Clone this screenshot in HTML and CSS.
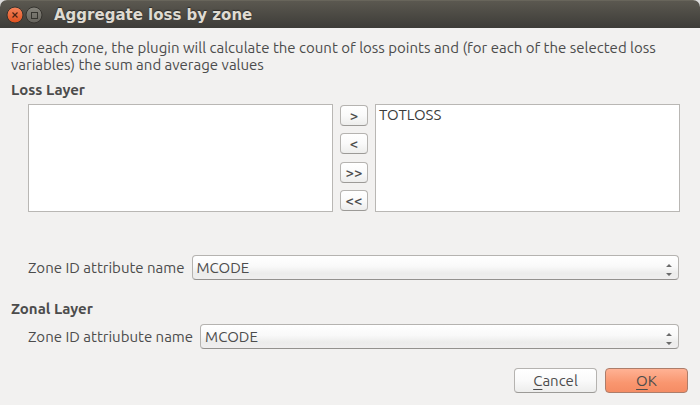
FILE: index.html
```html
<!DOCTYPE html>
<html lang="en">
<head>
<meta charset="utf-8">
<title>Aggregate loss by zone</title>
<link rel="stylesheet" href="styles.css">
</head>
<body>
<div class="window">
  <header class="titlebar">
    <button class="winbtn" type="button" aria-label="Close">
      <svg viewBox="0 0 18 18" width="18" height="18">
        <defs><linearGradient id="closeFill" x1="0" y1="0" x2="0" y2="1"><stop offset="0" stop-color="#f4845c"/><stop offset="1" stop-color="#e0501d"/></linearGradient></defs>
        <circle cx="9" cy="9" r="8" fill="url(#closeFill)" stroke="#35332e"/>
        <path d="M6.5 6.5l5 5M11.5 6.5l-5 5" stroke="#4a2416" stroke-width="1.2"/>
      </svg>
    </button>
    <button class="winbtn" type="button" aria-label="Maximize">
      <svg viewBox="0 0 18 18" width="18" height="18">
        <defs><linearGradient id="maxFill" x1="0" y1="0" x2="0" y2="1"><stop offset="0" stop-color="#86847c"/><stop offset="1" stop-color="#65635c"/></linearGradient></defs>
        <circle cx="9" cy="9" r="8" fill="url(#maxFill)" stroke="#35332e"/>
        <rect x="6.5" y="6.5" width="6" height="6" fill="none" stroke="#35342f"/>
      </svg>
    </button>
    <h1 class="title">Aggregate loss by zone</h1>
  </header>
  <form class="content">
    <p class="intro">For each zone, the plugin will calculate the count of loss points and (for each of the selected loss variables) the sum and average values</p>

    <h2 class="heading">Loss Layer</h2>
    <div class="picker">
      <select class="list" multiple aria-label="Available variables"></select>
      <div class="movers">
        <button class="button mover" type="button">&gt;</button>
        <button class="button mover" type="button">&lt;</button>
        <button class="button mover" type="button">&gt;&gt;</button>
        <button class="button mover" type="button">&lt;&lt;</button>
      </div>
      <select class="list" multiple aria-label="Selected variables"><option>TOTLOSS</option></select>
    </div>
    <div class="field">
      <label for="lossZone">Zone ID attribute name</label>
      <div class="combo">
        <select id="lossZone"><option>MCODE</option></select>
        <svg class="arrows" viewBox="0 0 6 12" width="6" height="12"><path d="M0 3L3 0L6 3zM0 9L3 12L6 9z"/></svg>
      </div>
    </div>

    <h2 class="heading zonal">Zonal Layer</h2>
    <div class="field">
      <label for="zonalZone">Zone ID attriubute name</label>
      <div class="combo">
        <select id="zonalZone"><option>MCODE</option></select>
        <svg class="arrows" viewBox="0 0 6 12" width="6" height="12"><path d="M0 3L3 0L6 3zM0 9L3 12L6 9z"/></svg>
      </div>
    </div>

    <div class="actions">
      <button class="button action" type="button"><span class="key">C</span>ancel</button>
      <button class="button action primary" type="submit"><span class="key">O</span>K</button>
    </div>
  </form>
</div>
</body>
</html>
```
FILE: styles.css
```css
* {
  box-sizing: border-box;
}

body {
  margin: 0;
  background: #dcdcdc;
  color: #4c4c4c;
  font: 15px/17px Ubuntu, "Noto Sans", sans-serif;
}

.window {
  min-height: 100vh;
  background: #f2f1f0;
  border-radius: 7px 7px 0 0;
  overflow: hidden;
}

.titlebar {
  display: flex;
  align-items: center;
  gap: 1px;
  height: 28px;
  padding-left: 6px;
  background: linear-gradient(#5b5850, #3d3c38);
  border-top: 1px solid #68655b;
}

.winbtn {
  display: block;
  width: 18px;
  height: 18px;
  padding: 0;
  border: 0;
  background: none;
}

.winbtn svg {
  display: block;
}

.title {
  margin: 0 0 0 10px;
  color: #dfdbd2;
  font: bold 15px/18px "DejaVu Sans", sans-serif;
  text-shadow: 0 -1px 1px #2b2a27;
}

.content {
  padding: 11px 12px 0 11px;
}

.intro {
  margin: 0 0 8px;
}

.heading {
  margin: 0;
  font-size: 15px;
  line-height: 17px;
}

.picker {
  display: flex;
  gap: 7px;
  height: 108px;
  margin: 6px 8px 43px 17px;
}

.list {
  flex: 1;
  min-width: 0;
  height: 100%;
  margin: 0;
  padding: 1px 2px;
  border: 1px solid #b9b7b4;
  border-radius: 0;
  background: #fff;
  color: #3c3c3c;
  font: inherit;
  outline: 0;
  overflow: hidden;
}

.list option {
  padding: 0 1px;
  min-height: 17px;
}

.movers {
  display: flex;
  flex-direction: column;
  justify-content: space-between;
  width: 28px;
  padding: 1px 0;
}

.button {
  padding: 0;
  border: 1px solid #b5b3b0;
  border-bottom-color: #9c9a97;
  border-radius: 4px;
  background: linear-gradient(#fff, #fafafa 50%, #ededec);
  color: #4c4c4c;
  font: inherit;
}

.mover {
  height: 21px;
  font-weight: 500;
}

.field {
  display: flex;
  align-items: center;
  gap: 7px;
  margin: 0 9px 0 17px;
}

.combo {
  position: relative;
  flex: 1;
}

.combo select {
  display: block;
  width: 100%;
  height: 25px;
  padding: 0 20px 0 4px;
  border: 1px solid #b5b3b0;
  border-bottom-color: #93918e;
  border-radius: 4px;
  background: linear-gradient(#fff, #f9f9f9 45%, #ececeb 75%, #efeeee);
  color: #4c4c4c;
  font: inherit;
  appearance: none;
}

.arrows {
  position: absolute;
  top: 9px;
  right: 7px;
  fill: #6a6a6a;
  pointer-events: none;
}

.zonal {
  margin: 20px 0 7px;
}

.actions {
  display: flex;
  justify-content: flex-end;
  gap: 8px;
  margin-top: 19px;
}

.action {
  width: 83px;
  height: 25px;
}

.primary {
  border-color: #ad7d6a;
  background: linear-gradient(#ffb294, #f9966f 60%, #f58c64);
}

.key {
  text-decoration: underline;
  text-underline-offset: 3px;
  text-decoration-thickness: 1px;
}
```
